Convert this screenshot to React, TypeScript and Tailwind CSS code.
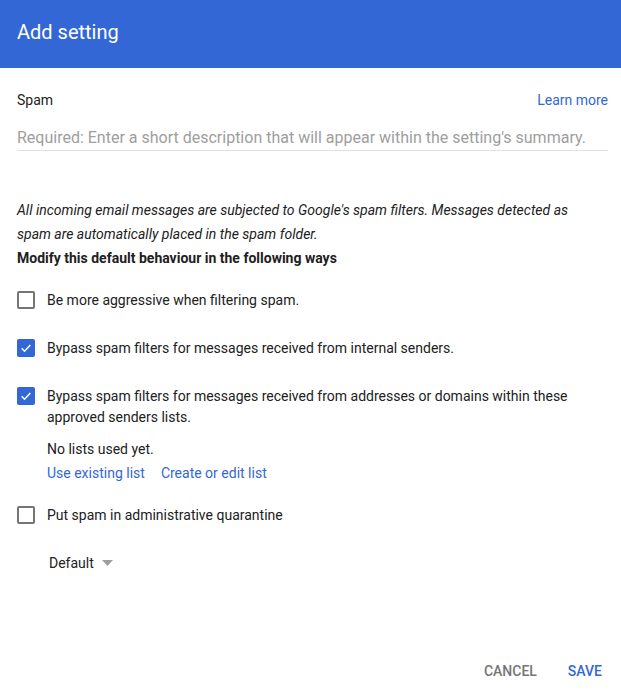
import React, { useState } from 'react';

const Checkbox = ({ checked, onChange }: { checked: boolean; onChange: () => void }) => (
    <button
        onClick={onChange}
        className={`mt-[1px] w-[18px] h-[18px] flex-shrink-0 rounded-[2px] flex items-center justify-center ${
            checked ? 'bg-[#3367d6]' : 'border-2 border-[#757575] bg-white'
        }`}
    >
        {checked && (
            <svg width="14" height="14" viewBox="0 0 24 24" fill="none">
                <path d="M4.5 12.5l5 5L19.5 7" stroke="white" strokeWidth="2.6" />
            </svg>
        )}
    </button>
);

export default function App() {
    const [opts, setOpts] = useState([false, true, true, false]);
    const toggle = (i: number) => setOpts(o => o.map((v, j) => (j === i ? !v : v)));

    return (
        <div className="w-[621px] h-[691px] bg-white flex flex-col text-[#212121] font-['Roboto',sans-serif]">
            {/* Header */}
            <div className="h-[68px] bg-[#3367d6] flex items-center px-[17px] pb-[4px] flex-shrink-0">
                <h1 className="text-white text-[20px] font-normal">Add setting</h1>
            </div>

            <div className="flex-1 flex flex-col pl-[17px] pr-[13px]">
                <div className="mt-[22px] flex justify-between items-center h-[20px] text-[14px]">
                    <span>Spam</span>
                    <a className="text-[#3367d6] cursor-pointer">Learn more</a>
                </div>

                <div className="mt-[16px] border-b border-[#e0e0e0]">
                    <input
                        className="w-full h-[22px] text-[16px] outline-none placeholder:text-[#9e9e9e]"
                        placeholder="Required: Enter a short description that will appear within the setting's summary."
                    />
                </div>

                <p className="mt-[47px] text-[14px] italic leading-[24px] pr-[10px]">
                    All incoming email messages are subjected to Google's spam filters. Messages detected as spam are
                    automatically placed in the spam folder.
                </p>
                <p className="text-[14px] font-bold leading-[24px]">Modify this default behaviour in the following ways</p>

                <div className="mt-[20px] flex gap-[12px] items-start">
                    <Checkbox checked={opts[0]} onChange={() => toggle(0)} />
                    <span className="text-[14px] leading-[21px]">Be more aggressive when filtering spam.</span>
                </div>

                <div className="mt-[27px] flex gap-[12px] items-start">
                    <Checkbox checked={opts[1]} onChange={() => toggle(1)} />
                    <span className="text-[14px] leading-[21px]">
                        Bypass spam filters for messages received from internal senders.
                    </span>
                </div>

                <div className="mt-[27px] flex gap-[12px] items-start">
                    <Checkbox checked={opts[2]} onChange={() => toggle(2)} />
                    <div className="flex flex-col text-[14px]">
                        <span className="leading-[21px] pr-[30px]">
                            Bypass spam filters for messages received from addresses or domains within these approved
                            senders lists.
                        </span>
                        <span className="mt-[9px] leading-[24px]">No lists used yet.</span>
                        <div className="flex gap-[16px] leading-[24px] text-[#3367d6]">
                            <a className="cursor-pointer">Use existing list</a>
                            <a className="cursor-pointer">Create or edit list</a>
                        </div>
                    </div>
                </div>

                <div className="mt-[20px] flex gap-[12px] items-start">
                    <Checkbox checked={opts[3]} onChange={() => toggle(3)} />
                    <span className="text-[14px] leading-[21px]">Put spam in administrative quarantine</span>
                </div>

                <div className="mt-[25px] ml-[32px] flex items-center gap-[8px] h-[24px] text-[14px]">
                    <span>Default</span>
                    <svg width="11" height="6" viewBox="0 0 11 6">
                        <path d="M0 0h11L5.5 6z" fill="#9e9e9e" />
                    </svg>
                </div>

                <div className="mt-auto mb-[10px] flex justify-end items-center gap-[31px] pr-[6px] h-[20px] text-[14px] font-medium">
                    <button className="text-[#757575]">CANCEL</button>
                    <button className="text-[#3367d6]">SAVE</button>
                </div>
            </div>
        </div>
    );
}
